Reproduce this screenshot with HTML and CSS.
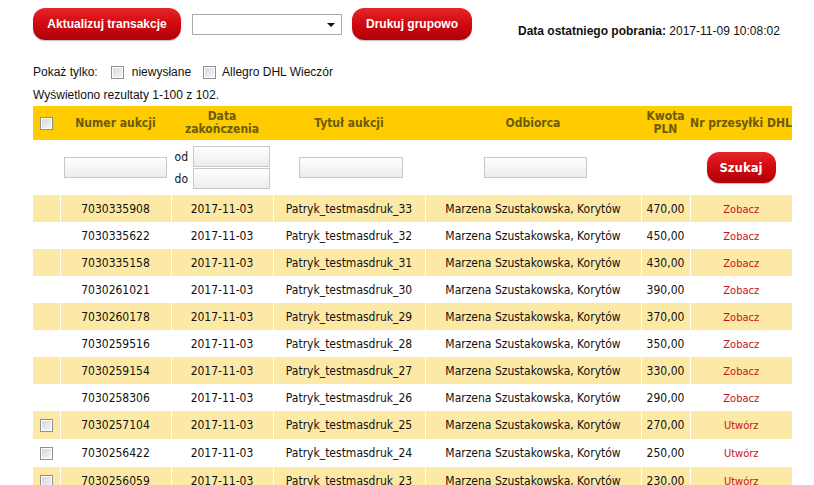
FILE: index.html
```html
<!DOCTYPE html>
<html lang="pl">
<head>
<meta charset="utf-8">
<title>Transakcje</title>
<link rel="stylesheet" href="styles.css">
</head>
<body>
<div class="page">
  <div class="toolbar">
    <button class="btn btn-wide">Aktualizuj transakcje</button>
    <div class="select"><span class="arrow"></span></div>
    <button class="btn btn-print">Drukuj grupowo</button>
    <div class="last-date"><b>Data ostatniego pobrania:</b> 2017-11-09 10:08:02</div>
  </div>
  <div class="show-only">
    <span>Pokaż tylko:</span>
    <span class="chk"></span><span>niewysłane</span>
    <span class="chk chk-2"></span><span>Allegro DHL Wieczór</span>
  </div>
  <div class="count">Wyświetlono rezultaty 1-100 z 102.</div>
  <table class="grid">
    <colgroup>
      <col class="c-chk"><col class="c-num"><col class="c-date"><col class="c-title"><col class="c-rcpt"><col class="c-amt"><col class="c-dhl">
    </colgroup>
    <thead>
      <tr>
        <th><span class="chk"></span></th>
        <th>Numer aukcji</th>
        <th>Data<br>zakończenia</th>
        <th>Tytuł aukcji</th>
        <th>Odbiorca</th>
        <th>Kwota<br>PLN</th>
        <th>Nr przesyłki DHL</th>
      </tr>
    </thead>
    <tbody>
      <tr class="filter">
        <td></td>
        <td><span class="inp inp-num"></span></td>
        <td>
          <div class="range">
            <div class="range-row"><span class="lbl">od</span><span class="inp inp-date"></span></div>
            <div class="range-row"><span class="lbl">do</span><span class="inp inp-date"></span></div>
          </div>
        </td>
        <td><span class="inp inp-title"></span></td>
        <td><span class="inp inp-rcpt"></span></td>
        <td></td>
        <td><button class="btn btn-search">Szukaj</button></td>
      </tr>
      <tr class="alt"><td></td><td>7030335908</td><td>2017-11-03</td><td>Patryk_testmasdruk_33</td><td>Marzena Szustakowska, Korytów</td><td>470,00</td><td><a class="lnk">Zobacz</a></td></tr>
      <tr><td></td><td>7030335622</td><td>2017-11-03</td><td>Patryk_testmasdruk_32</td><td>Marzena Szustakowska, Korytów</td><td>450,00</td><td><a class="lnk">Zobacz</a></td></tr>
      <tr class="alt"><td></td><td>7030335158</td><td>2017-11-03</td><td>Patryk_testmasdruk_31</td><td>Marzena Szustakowska, Korytów</td><td>430,00</td><td><a class="lnk">Zobacz</a></td></tr>
      <tr><td></td><td>7030261021</td><td>2017-11-03</td><td>Patryk_testmasdruk_30</td><td>Marzena Szustakowska, Korytów</td><td>390,00</td><td><a class="lnk">Zobacz</a></td></tr>
      <tr class="alt"><td></td><td>7030260178</td><td>2017-11-03</td><td>Patryk_testmasdruk_29</td><td>Marzena Szustakowska, Korytów</td><td>370,00</td><td><a class="lnk">Zobacz</a></td></tr>
      <tr><td></td><td>7030259516</td><td>2017-11-03</td><td>Patryk_testmasdruk_28</td><td>Marzena Szustakowska, Korytów</td><td>350,00</td><td><a class="lnk">Zobacz</a></td></tr>
      <tr class="alt"><td></td><td>7030259154</td><td>2017-11-03</td><td>Patryk_testmasdruk_27</td><td>Marzena Szustakowska, Korytów</td><td>330,00</td><td><a class="lnk">Zobacz</a></td></tr>
      <tr><td></td><td>7030258306</td><td>2017-11-03</td><td>Patryk_testmasdruk_26</td><td>Marzena Szustakowska, Korytów</td><td>290,00</td><td><a class="lnk">Zobacz</a></td></tr>
      <tr class="alt tall"><td><span class="chk"></span></td><td>7030257104</td><td>2017-11-03</td><td>Patryk_testmasdruk_25</td><td>Marzena Szustakowska, Korytów</td><td>270,00</td><td><a class="lnk">Utwórz</a></td></tr>
      <tr class="tall"><td><span class="chk"></span></td><td>7030256422</td><td>2017-11-03</td><td>Patryk_testmasdruk_24</td><td>Marzena Szustakowska, Korytów</td><td>250,00</td><td><a class="lnk">Utwórz</a></td></tr>
      <tr class="alt tall"><td><span class="chk"></span></td><td>7030256059</td><td>2017-11-03</td><td>Patryk_testmasdruk_23</td><td>Marzena Szustakowska, Korytów</td><td>230,00</td><td><a class="lnk">Utwórz</a></td></tr>
    </tbody>
  </table>
</div>
</body>
</html>
```

FILE: styles.css
```css
html, body {
  margin: 0;
  padding: 0;
  background: #fff;
}
body {
  font-family: "Liberation Sans", Arial, sans-serif;
  font-size: 12px;
  color: #111;
  overflow: hidden;
}
.page {
  padding: 8px 0 0 33px;
}
.toolbar {
  display: flex;
  align-items: flex-start;
  height: 32px;
}
.btn {
  border: 0;
  border-radius: 12px;
  color: #fff;
  font-family: "Liberation Sans", Arial, sans-serif;
  font-weight: bold;
  font-size: 12px;
  background: linear-gradient(#e5262b 0%, #d30b12 45%, #b00008 100%);
  box-shadow: 0 1px 1px rgba(0,0,0,0.25);
  padding: 0;
  height: 32px;
}
.btn-wide {
  width: 148px;
}
.btn-print {
  width: 120px;
  margin-left: 10px;
}
.select {
  margin-left: 11px;
  margin-top: 6px;
  width: 148px;
  height: 19px;
  border: 1px solid #a9a9a9;
  background: #fff;
  display: flex;
  justify-content: flex-end;
  align-items: center;
}
.arrow {
  width: 0;
  height: 0;
  border-left: 4px solid transparent;
  border-right: 4px solid transparent;
  border-top: 4px solid #111;
  margin-right: 6px;
}
.last-date {
  margin-left: 46px;
  margin-top: 16px;
  font-size: 12px;
  color: #111;
}
.show-only {
  display: flex;
  align-items: center;
  margin-top: 24px;
  height: 16px;
}
.show-only .chk {
  margin: 0 8px 0 13px;
}
.show-only .chk-2 {
  margin: 0 6px 0 12px;
}
.count {
  margin-top: 8px;
  height: 14px;
  line-height: 14px;
}
.chk {
  display: inline-block;
  width: 11px;
  height: 11px;
  border: 1px solid #8f8f8f;
  background: linear-gradient(135deg, #d6d6d6, #f7f7f7);
  box-shadow: inset 0 0 0 1px #fff;
  vertical-align: middle;
}
.grid {
  margin-top: 4px;
  width: 759px;
  border-collapse: collapse;
  table-layout: fixed;
  font-family: "DejaVu Sans Condensed", "DejaVu Sans", Tahoma, sans-serif;
  font-size: 12px;
  color: #111;
}
.c-chk { width: 27px; }
.c-num { width: 111px; }
.c-date { width: 102px; }
.c-title { width: 152px; }
.c-rcpt { width: 216px; }
.c-amt { width: 49px; }
.c-dhl { width: 102px; }
.grid th {
  background: #ffcc00;
  color: #6b5b0b;
  font-weight: bold;
  height: 34px;
  padding: 0;
  line-height: 13px;
  text-align: center;
  vertical-align: middle;
  white-space: nowrap;
}
.grid td {
  padding: 0;
  height: 27px;
  text-align: center;
  vertical-align: middle;
  white-space: nowrap;
  border-left: 1px solid #fff;
}
.grid td:first-child {
  border-left: 0;
}
.grid tr.tall td {
  height: 28px;
}
.grid tr.alt td {
  background: #fde9a6;
}
.grid tr.filter td {
  height: 55px;
  border-left: 0;
}
.inp {
  display: inline-block;
  height: 19px;
  border: 1px solid #c8c8c8;
  background: linear-gradient(#ffffff, #ececec);
  vertical-align: middle;
}
.inp-num { width: 101px; }
.inp-title { width: 102px; margin-left: 4px; }
.inp-rcpt { width: 101px; margin-left: 4px; }
.inp-date { width: 75px; }
.range {
  display: flex;
  flex-direction: column;
  align-items: flex-end;
  padding-right: 3px;
}
.range-row {
  display: flex;
  align-items: center;
  height: 21px;
}
.range-row + .range-row {
  margin-top: 1px;
}
.range .lbl {
  margin-right: 5px;
  color: #111;
}
.btn-search {
  width: 69px;
  height: 31px;
  font-family: "DejaVu Sans Condensed", "DejaVu Sans", Tahoma, sans-serif;
  font-size: 13px;
  margin-left: 0;
}
.lnk {
  color: #c8101c;
  font-size: 11px;
}
```
